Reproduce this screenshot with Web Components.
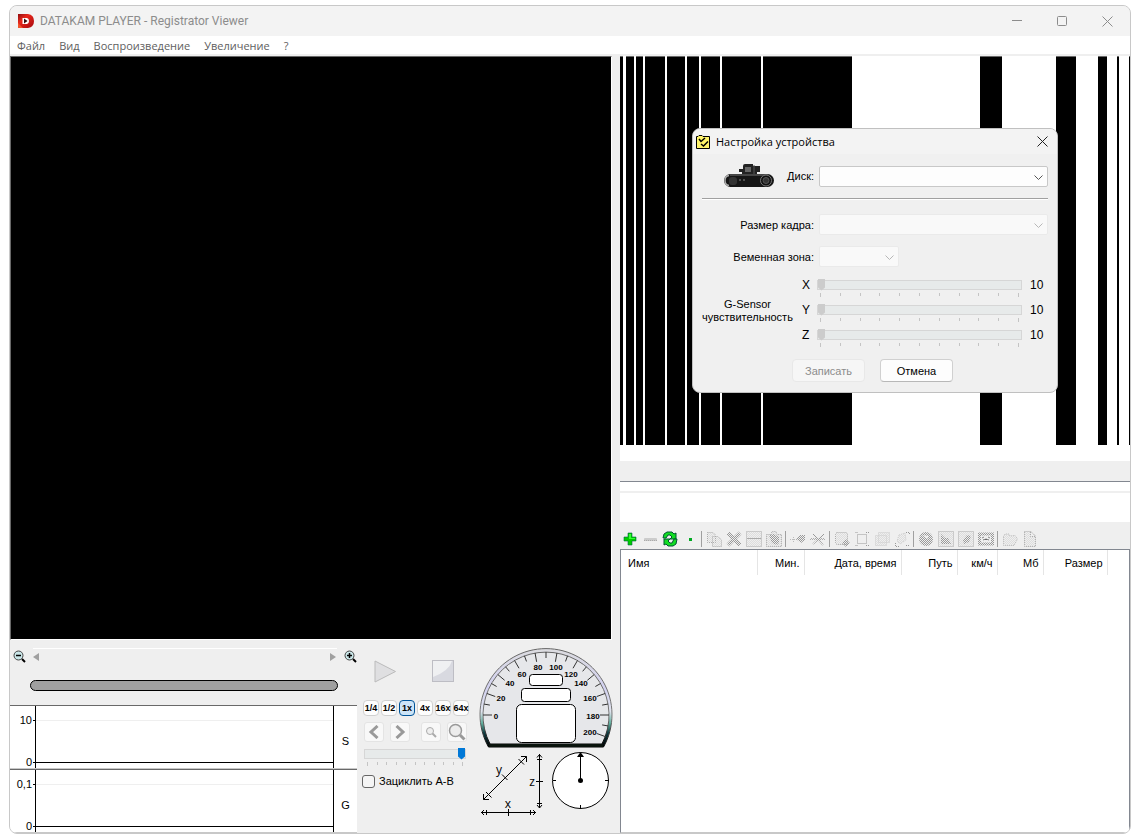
<!DOCTYPE html>
<html lang="ru">
<head>
<meta charset="utf-8">
<title>DATAKAM PLAYER - Registrator Viewer</title>
<style>
  body {
    margin: 0;
    background: #fff;
    font-family: "Liberation Sans", Arial, sans-serif;
    font-size: 11px;
    color: #000;
  }
</style>
</head>
<body>
<player-window></player-window>

<script>
// small helper: every element below renders a static shadow root
function define(name, html) {
  customElements.define(name, class extends HTMLElement {
    constructor() {
      super();
      this.attachShadow({ mode: 'open' });
      this.shadowRoot.innerHTML = typeof html === 'function' ? html(this) : html;
    }
  });
}

/* ---------- title bar ---------- */
define('title-bar', `
  <style>
    :host {
      display: flex;
      align-items: center;
      height: 30px;
      background: #f3f3f3;
      color: #8c8c8c;
      font: 12px/16px Roboto, sans-serif;
    }
    .logo { margin-left: 8px; margin-right: 6px; }
    .name { flex: 1; }
    button {
      width: 45px;
      height: 30px;
      padding: 0;
      border: 0;
      background: none;
    }
    button svg { display: block; margin: 0 auto; }
  </style>
  <svg class="logo" width="16" height="14" viewBox="0 0 16 14">
    <defs>
      <linearGradient id="r" x1="0" y1="0" x2="1" y2="1">
        <stop offset="0" stop-color="#8e0d10"/><stop offset=".35" stop-color="#e8281c"/><stop offset="1" stop-color="#a5080e"/>
      </linearGradient>
    </defs>
    <path d="M0 0H10Q16 1 16 7T10 14H0Z" fill="url(#r)"/>
    <path d="M0 9L5 14H0Z" fill="#f0542c"/>
    <path d="M4.500 4H9Q11 4.500 11 7T9 10H4.500Z" fill="#fff"/>
    <path d="M6 4.500V9.500L9.500 7Z" fill="#3a1010"/>
  </svg>
  <span class="name">DATAKAM PLAYER - Registrator Viewer</span>
  <button aria-label="Свернуть"><svg width="11" height="11"><path d="M0 4.500H10" stroke="#8c8c8c"/></svg></button>
  <button aria-label="Развернуть"><svg width="11" height="11"><rect x=".5" y=".5" width="9" height="9" rx="1" fill="none" stroke="#8c8c8c"/></svg></button>
  <button aria-label="Закрыть"><svg width="11" height="11"><path d="M.5 .5L10.500 10.500M10.500 .5L.5 10.500" stroke="#8c8c8c"/></svg></button>
`);

/* ---------- menu ---------- */
define('menu-bar', `
  <style>
    :host {
      display: flex;
      gap: 14px;
      height: 18px;
      padding-left: 7px;
      background: #fff;
      border-bottom: 2px solid #efefef;
    }
    button {
      padding: 0;
      border: 0;
      background: none;
      color: #606060;
      font: 11px/20px "Open Sans", sans-serif;
    }
  </style>
  <button>Файл</button>
  <button>Вид</button>
  <button>Воспроизведение</button>
  <button>Увеличение</button>
  <button>?</button>
`);

/* ---------- video ---------- */
define('video-view', `
  <style>
    :host {
      display: block;
      flex: 1;
      margin-right: 2px;
      background: #000;
      border: 1px solid #fff;
      border-top-color: #696969;
      border-left-color: #696969;
    }
  </style>
`);

/* ---------- time line ---------- */
define('time-scroll', `
  <style>
    :host {
      display: flex;
      flex-direction: column;
      height: 65px;
    }
    .row {
      display: flex;
      align-items: center;
      gap: 7px;
      padding: 8px 0 0 3px;
    }
    .line {
      flex: 1;
      display: flex;
      justify-content: space-between;
      align-items: center;
      height: 16px;
      border-top: 1px solid #fff;
    }
    button { padding: 0; border: 0; background: none; }
    button svg { display: block; }
    .bar {
      height: 9px;
      margin: 15px 19px 0 20px;
      border: 1px solid #000;
      border-radius: 6px;
      background: #a0a0a0;
    }
  </style>
  <div class="row">
    <button aria-label="Уменьшить"><svg width="13" height="13"><circle cx="5.500" cy="5.500" r="4.500" fill="#c9e6e8" stroke="#444"/><path d="M3 5.500H8" stroke="#000" stroke-width="1.500"/><path d="M9 9L12 12" stroke="#000" stroke-width="2"/></svg></button>
    <div class="line">
      <button aria-label="Назад"><svg width="8" height="8"><path d="M6 0V8L0 4Z" fill="#a0a0a0"/></svg></button>
      <button aria-label="Вперёд"><svg width="8" height="8"><path d="M1 0V8L7 4Z" fill="#a0a0a0"/></svg></button>
    </div>
    <button aria-label="Увеличить"><svg width="13" height="13"><circle cx="5.500" cy="5.500" r="4.500" fill="#c9e6e8" stroke="#444"/><path d="M3 5.500H8M5.500 3V8" stroke="#000" stroke-width="1.500"/><path d="M9 9L12 12" stroke="#000" stroke-width="2"/></svg></button>
  </div>
  <div class="bar"></div>
`);

define('data-chart', `
  <style>
    :host {
      display: grid;
      grid-template-columns: 25px minmax(0, 1fr) 23px;
      height: 62px;
      background: #fff;
      border-top: 1px solid #696969;
      border-bottom: 1px solid #c8c8c8;
    }
    .scale {
      display: flex;
      flex-direction: column;
      gap: 30px;
      padding-top: 8px;
      text-align: right;
      line-height: 12px;
    }
    .scale span { display: flex; justify-content: flex-end; align-items: center; gap: 1px; }
    .scale span::after { content: ""; width: 2px; height: 1px; background: #000; }
    .plot {
      display: grid;
      grid-template-rows: 14px 1px 41px 1px;
      border-left: 1px solid #000;
      border-right: 1px solid #000;
    }
    .grid { grid-row: 2; background: #efefef; }
    .zero { grid-row: 4; background: #000; }
    .unit { align-self: center; text-align: center; padding-top: 8px; }
  </style>
  <div class="scale"><span><slot name="max"></slot></span><span>0</span></div>
  <div class="plot"><i class="grid"></i><i class="zero"></i></div>
  <div class="unit"><slot></slot></div>
`);

/* ---------- slider with ticks ---------- */
define('tick-slider', el => {
  const disabled = el.hasAttribute('off');
  const label = el.getAttribute('label');
  const shown = el.getAttribute('shown');
  return `
  <style>
    :host { display: block; height: 25px; }
    .row { display: flex; align-items: flex-start; }
    label { width: 15px; line-height: 15px; font-size: 12px; }
    output { width: 17px; padding-left: 8px; line-height: 15px; font-size: 12px; }
    .mid { flex: 1; min-width: 0; }
    input {
      appearance: none;
      display: block;
      width: 100%;
      height: 13px;
      margin: 0;
      background: none;
    }
    input::-webkit-slider-runnable-track {
      box-sizing: border-box;
      height: 10px;
      border: 1px solid #d6d6d6;
      background: #e7eaea;
    }
    input::-webkit-slider-thumb {
      appearance: none;
      width: 7px;
      height: 12px;
      margin-top: -2px;
      border: 0;
      background: ${disabled ? '#ccc' : '#0078d7'};
      clip-path: polygon(0 0, 100% 0, 100% 75%, 50% 100%, 0 75%);
    }
    .ticks { display: flex; justify-content: space-between; padding: 2px 3px 0; }
    .ticks i { width: 1px; height: 3px; background: #c4c4c4; }
    .ticks i:first-child, .ticks i:last-child { height: 4px; }
  </style>
  <div class="row">
    ${label ? `<label for="r">${label}</label>` : ''}
    <div class="mid">
      <input id="r" type="range" min="0" max="10" value="${el.getAttribute('value')}" ${label ? '' : 'aria-label="Скорость"'} ${disabled ? 'disabled' : ''}>
      <div class="ticks">${'<i></i>'.repeat(11)}</div>
    </div>
    ${shown ? `<output for="r">${shown}</output>` : ''}
  </div>`;
});

/* ---------- playback controls ---------- */
define('play-controls', `
  <style>
    :host {
      display: flex;
      flex-direction: column;
      width: 107px;
      padding-top: 20px;
    }
    button { padding: 0; border: 0; background: none; }
    button svg { display: block; margin: 0 auto; }
    .main { display: flex; gap: 35px; padding-left: 12px; }
    .speed { display: flex; gap: 2px; margin: 17px 0 0 1px; }
    .speed button {
      box-sizing: border-box;
      width: 16px;
      height: 16px;
      border: 1px solid #d0d0d0;
      border-radius: 4px;
      background: #fdfdfd;
      display: flex;
      justify-content: center;
      font: bold 9px/14px "Liberation Sans", Arial, sans-serif;
      color: #000;
    }
    .speed .on { background: #cce4f7; border-color: #005499; }
    .nav { display: flex; gap: 6px; margin: 6px 0 5px 2px; }
    .nav button {
      box-sizing: border-box;
      width: 20px;
      height: 20px;
      border: 1px solid #e4e4e4;
      border-radius: 3px;
      background: #f8f8f8;
    }
    .nav .far { margin-left: 5px; }
    tick-slider { width: 102px; margin-left: 2px; }
    .loop { display: flex; align-items: center; gap: 4px; margin-top: 3px; line-height: 13px; }
    .loop input {
      appearance: none;
      box-sizing: border-box;
      width: 13px;
      height: 13px;
      margin: 0;
      border: 1px solid #666;
      border-radius: 3px;
      background: #f5f5f5;
    }
  </style>
  <div class="main">
    <button aria-label="Воспроизвести"><svg width="23" height="23"><path d="M1 1V22L21.500 11.500Z" fill="#dfdfe1" stroke="#bbb"/></svg></button>
    <button aria-label="Стоп"><svg width="23" height="23"><rect x=".5" y=".5" width="21" height="21" fill="#d8d9e0" stroke="#bdbdc4"/><path d="M1 1H20Q17 11 1 17Z" fill="#eff0f2"/></svg></button>
  </div>
  <div class="speed">
    <button>1/4</button><button>1/2</button><button class="on">1x</button><button>4x</button><button>16x</button><button>64x</button>
  </div>
  <div class="nav">
    <button aria-label="Предыдущий"><svg width="12" height="14"><path d="M9.500 1L3 7L9.500 13" fill="none" stroke="#999" stroke-width="3"/></svg></button>
    <button aria-label="Следующий"><svg width="12" height="14"><path d="M2.500 1L9 7L2.500 13" fill="none" stroke="#999" stroke-width="3"/></svg></button>
    <button class="far" aria-label="Мельче"><svg width="12" height="12"><circle cx="5" cy="5" r="3.500" fill="#eee" stroke="#aaa"/><path d="M7.500 7.500L11 11" stroke="#aaa" stroke-width="2"/></svg></button>
    <button aria-label="Крупнее"><svg width="18" height="18"><circle cx="7.500" cy="7.500" r="6" fill="#ececec" stroke="#999" stroke-width="1.500"/><path d="M12 12L16.500 16.500" stroke="#999" stroke-width="3"/></svg></button>
  </div>
  <tick-slider value="10"></tick-slider>
  <div class="loop"><input id="loop" type="checkbox"><label for="loop">Зациклить A-B</label></div>
`);

/* ---------- speedometer, axes, compass ---------- */
define('speed-gauge', () => {
  const cx = 67, cy = 67;
  let ticks = '';
  // one degree for one km/h, zero points to the left
  for (let v = 0; v <= 200; v += 10) {
    const a = (180 + v) * Math.PI / 180;
    const r = v % 20 ? 57 : 54;
    ticks += `<path d="M${cx + r * Math.cos(a)} ${cy + r * Math.sin(a)}L${cx + 63 * Math.cos(a)} ${cy + 63 * Math.sin(a)}"/>`;
  }
  const labels = [[0, 17, 71], [20, 22, 53], [40, 31, 38], [60, 43, 29], [80, 59, 22], [100, 77, 22],
    [120, 92, 29], [140, 102, 38], [160, 111, 53], [180, 114, 71], [200, 111, 87]];
  return `
  <style>
    :host { display: block; }
    svg { display: block; }
    text { font: bold 8px "Liberation Sans", Arial, sans-serif; text-anchor: middle; }
  </style>
  <svg width="134" height="100" viewBox="0 0 134 100">
    <defs>
      <linearGradient id="rim" x1="0" y1="0" x2="0" y2="1">
        <stop offset="0" stop-color="#dcdce0"/><stop offset=".4" stop-color="#d2d1f0"/>
        <stop offset=".64" stop-color="#e0e4ee"/><stop offset=".76" stop-color="#5fae9c"/>
        <stop offset=".86" stop-color="#0e3a40"/><stop offset="1" stop-color="#000"/>
      </linearGradient>
      <linearGradient id="edge" x1="0" y1="0" x2="0" y2="1">
        <stop offset="0" stop-color="#666"/><stop offset=".7" stop-color="#777"/><stop offset="1" stop-color="#000"/>
      </linearGradient>
    </defs>
    <path d="M9.500 99A66 66 0 1 1 124.500 99Z" fill="url(#rim)" stroke="url(#edge)"/>
    <path d="M11 96A63 63 0 1 1 123 96Z" fill="#e6e7ea" stroke="url(#edge)"/>
    <path d="M10 97.500H124" stroke="#0a140d" stroke-width="3"/>
    <g stroke="#333">${ticks}</g>
    ${labels.map(l => `<text x="${l[1]}" y="${l[2]}">${l[0]}</text>`).join('')}
    <g fill="#fff" stroke="#000">
      <rect x="50.500" y="26.500" width="33" height="11" rx="3"/>
      <rect x="42.500" y="40.500" width="49" height="13" rx="3"/>
      <rect x="37.500" y="56.500" width="59" height="38" rx="5"/>
    </g>
  </svg>`;
});

define('sensor-view', `
  <style>
    :host { display: flex; justify-content: space-between; padding: 4px 3px 0 1px; }
    .axes { margin-top: 2px; }
    text { font: 12px "Open Sans", sans-serif; text-anchor: middle; }
  </style>
  <svg class="axes" width="64" height="64">
    <g stroke="#000" fill="none">
      <path d="M3.500 45.500L46.500 2.500M41 2.500H46.500V8M3.500 40V45.500H9M22 20.500L27.500 26M38.500 5L44 10.500M6 38L11.500 43.500"/>
      <path d="M59.500 0V54M57 3.500L59.500 .5L62 3.500M57 51L59.500 54L62 51M56 27.500H63M57 5.500H62M57 49.500H62"/>
      <path d="M1 58.500H56M4 56L1.500 58.500L4 61M53 56L55.500 58.500L53 61M28.500 55V62M6.500 56V61M50.500 56V61"/>
    </g>
    <text x="19" y="20">y</text><text x="52" y="32">z</text><text x="28" y="54">x</text>
  </svg>
  <svg width="58" height="58">
    <circle cx="28.500" cy="28.500" r="28" fill="#fff" stroke="#000"/>
    <path d="M28.500 1V28M28.500 53V57M1 28.500H4M53 28.500H57" stroke="#000"/>
    <path d="M28.500 0L32 5H25Z"/><circle cx="28.500" cy="28.500" r="2.500"/>
  </svg>
`);

/* ---------- map, its tiles are bare stripes ---------- */
define('track-map', () => {
  const bars = [[0, 3], [6, 14], [16, 23], [25, 45], [47, 65], [67, 79], [81, 100], [102, 141], [143, 232],
    [360, 382], [436, 456], [478, 487], [497, 499], [509, 510]];
  const draw = (y, h) => bars.map(b => `<rect x="${b[0]}" y="${y}" width="${b[1] - b[0]}" height="${h}"/>`).join('');
  return `
  <style>
    :host { display: block; padding-bottom: 16px; background: #fff; }
    svg { display: block; width: 100%; height: 389px; }
  </style>
  <svg viewBox="0 0 510 389" preserveAspectRatio="none" shape-rendering="crispEdges">
    ${draw(1, 388)}<g fill="#696969">${draw(0, 1)}</g>
  </svg>`;
});

define('info-panel', `
  <style>
    :host {
      display: block;
      margin-top: 20px;
      border-top: 1px solid #828790;
      background: #fff;
    }
    .head { height: 9px; border-bottom: 2px solid #efefef; }
    .text { height: 29px; }
  </style>
  <div class="head"></div>
  <div class="text"></div>
`);

/* ---------- toolbar ---------- */
const dots = 'fill="url(#d)" stroke="#aaa" stroke-dasharray="1 1"';
const icons = {
  'Добавить': '<path d="M6 2H10V6H14V10H10V14H6V10H2V6H6Z" fill="#0c0" stroke="#064" stroke-width=".6"/><path d="M7 3H9V7H13V8H7Z" fill="#3f3"/>',
  'Убрать': '<rect x="2" y="7" width="13" height="3" rx="1" fill="#ccc"/><path d="M2 9.500H15" stroke="#aaa" stroke-dasharray="1 1"/>',
  'Обновить': '<path d="M1 7L2 3L5 1H10L12 3L14 2V8H8L10 6L8 4H6L4 7Z" fill="#1d2" stroke="#053"/><path d="M15 8L14 13L11 15H6L4 13L2 14V8H8L6 10L8 12H10L12 8Z" fill="#1d2" stroke="#053"/>',
  'Меню': '<path d="M7 7H10V10H7Z" fill="#0a2"/>',
  'Копировать': `<path d="M1.500 1.500H7L9.500 4V11.500H1.500ZM6.500 5.500H12L15.500 9V15.500H6.500Z" ${dots}/>`,
  'Удалить': '<path d="M2 2L14 14M14 2L2 14" stroke="url(#k)" stroke-width="4"/>',
  'Сохранить': `<path d="M.5 .5H15.500V15.500H.5Z" ${dots}/><path d="M3 1H13V6H3ZM3 9H13V15H3Z" fill="url(#d)"/><path d="M1 7.500H15" stroke="#aaa"/>`,
  'Снимок': `<path d="M.5 3.500H5L6 .5H10L11 3.500H15.500V15.500H.5Z" ${dots}/><path d="M3 4L8 3L13 6V12L11 14L6 12Z" fill="url(#k)"/>`,
  'Метка': '<path d="M0 8.500H7M3.500 6V11" stroke="#bbb" stroke-dasharray="1 1"/><path d="M6 8L10 4H15V9L11 12Z" fill="url(#k)"/>',
  'Снять метку': '<path d="M0 8H15M3 3L13 14M14 3L3 13" stroke="url(#k)" stroke-width="1.500"/>',
  'Выбор': `<rect x="1.500" y="1.500" width="12" height="12" rx="2" ${dots}/><path d="M12 8L16 12L12 16L8 12Z" fill="url(#k)"/>`,
  'Область': `<rect x="3.500" y="3.500" width="9" height="9" fill="none" stroke="#999" stroke-dasharray="1 1"/><path d="M1.500 1.500H4M12 1.500H15M1.500 14.500H4M12 14.500H15" stroke="#999" stroke-dasharray="1 1"/>`,
  'Слои': '<path d="M4.500 1.500H15.500V11.500H4.500ZM1.500 4.500H12.500V14.500H1.500Z" fill="url(#d)" stroke="#ccc" stroke-dasharray="1 1"/>',
  'Связь': '<path d="M5 4L11 2L12 9L6 13L3 10Z" fill="url(#d)" stroke="#ccc" stroke-dasharray="1 1"/><path d="M12 1.500H15.500V4M1.500 12V15.500H5M12 14.500H15" fill="none" stroke="#999" stroke-dasharray="1 1"/>',
  'Глобус': '<circle cx="8" cy="8" r="7" fill="url(#k)"/><path d="M4 4L11 5L9 8Z" fill="#eee"/>',
  'Вид карты': `<rect x=".5" y=".5" width="15" height="15" ${dots}/><path d="M3 3L7 7H10L13 13H3Z" fill="url(#k)"/>`,
  'Привязка': `<rect x=".5" y=".5" width="15" height="15" ${dots}/><path d="M9 4L13 5L11 11L6 13L5 9Z" fill="url(#k)"/>`,
  'Маршрут': '<rect x="1.500" y="3" width="13" height="10" fill="none" stroke="url(#k)" stroke-width="3"/><path d="M4 7L6 6M10 6L12 7M5 9L8 8L11 9" stroke="#888"/>',
  'Открыть': '<path d="M1.500 5.500L3 3H7L8 5L13 4.500L15.500 8L12 14.500H1.500Z" fill="url(#d)" stroke="#bbb" stroke-dasharray="1 1"/>',
  'Файл': `<path d="M2.500 .5H9L13.500 5V15.500H2.500ZM8.500 1V5.500H13" ${dots}/>`
};

define('tool-bar', () => {
  const groups = [4, 4, 2, 4, 4, 2];
  const names = Object.keys(icons);
  let n = 0;
  const html = groups.map(count => names.slice(n, n += count).map(name =>
    `<button aria-label="${name}"><svg width="16" height="16"><defs>
      <pattern id="d" width="2" height="2" patternUnits="userSpaceOnUse"><path d="M0 0H1V1H0ZM1 1H2V2H1Z" fill="#ddd"/></pattern>
      <pattern id="k" width="2" height="2" patternUnits="userSpaceOnUse"><path d="M0 0H1V1H0ZM1 1H2V2H1Z" fill="#999"/></pattern>
    </defs>${icons[name]}</svg></button>`).join('')).join('<i></i>');
  return `
  <style>
    :host { display: flex; align-items: center; height: 27px; }
    button { width: 20px; height: 20px; padding: 0; border: 0; background: none; }
    button svg { display: block; margin: 5px auto 0; }
    i { width: 1px; height: 16px; margin: 7px 2px 0 1px; background: #a0a0a0; }
  </style>${html}`;
});

/* ---------- file list ---------- */
define('file-list', `
  <style>
    :host {
      display: block;
      flex: 1;
      border: 1px solid #828790;
      border-bottom-color: #c8c8c8;
      background: #fff;
    }
    table { width: 100%; table-layout: fixed; border-collapse: collapse; }
    th {
      box-sizing: border-box;
      height: 25px;
      padding: 0 4px;
      border-right: 1px solid #e5e5e5;
      font-weight: normal;
      text-align: right;
      white-space: nowrap;
    }
    th:first-child { text-align: left; padding-left: 7px; }
    th:last-child { border: 0; }
  </style>
  <table>
    <colgroup>
      <col style="width:136px"><col style="width:47px"><col style="width:97px"><col style="width:56px">
      <col style="width:40px"><col style="width:46px"><col style="width:64px"><col>
    </colgroup>
    <thead>
      <tr><th>Имя</th><th>Мин.</th><th>Дата, время</th><th>Путь</th><th>км/ч</th><th>Мб</th><th>Размер</th><th></th></tr>
    </thead>
  </table>
`);

/* ---------- device dialog ---------- */
define('combo-field', el => `
  <style>
    :host { display: flex; align-items: center; justify-content: flex-end; gap: 5px; }
    .box { display: grid; align-items: center; width: ${el.getAttribute('size')}px; }
    select {
      appearance: none;
      grid-area: 1 / 1;
      box-sizing: border-box;
      width: 100%;
      height: 21px;
      margin: 0;
      border: 1px solid #c8c8c8;
      border-radius: 2px;
      background: #fdfdfd;
    }
    svg { grid-area: 1 / 1; justify-self: end; margin: 2px 5px 0 0; }
    select:disabled { border-color: #eaeaea; background: #f9f9f9; opacity: 1; }
    select:disabled + svg { opacity: .4; }
  </style>
  <label for="s">${el.getAttribute('label')}</label>
  <div class="box">
    <select id="s" ${el.hasAttribute('off') ? 'disabled' : ''}></select>
    <svg width="9" height="5"><path d="M.5 .5L4.500 4.500L8.500 .5" fill="none" stroke="#555"/></svg>
  </div>
`);

define('device-dialog', `
  <style>
    :host {
      display: block;
      box-sizing: border-box;
      width: 366px;
      border: 1px solid #c0c0c0;
      border-radius: 8px;
      background: #f0f0f0;
      overflow: hidden;
    }
    header {
      display: flex;
      align-items: center;
      gap: 6px;
      height: 25px;
      padding: 0 9px 0 3px;
      background: #f3f3f3;
      font: 11px/16px "Open Sans", sans-serif;
    }
    header span { flex: 1; }
    header button { padding: 0; border: 0; background: none; }
    header svg { display: block; }
    .body { padding: 10px 9px 10px; }
    .disk { display: flex; align-items: center; justify-content: flex-end; gap: 13px; height: 24px; }
    hr { height: 1px; margin: 10px 0 14px; border: 0; background: #a0a0a0; border-bottom: 1px solid #fff; }
    .zone { margin: 11px 149px 11px 0; }
    .sensor { display: flex; gap: 9px; align-items: center; }
    .sensor p { width: 91px; margin: 0 0 10px; text-align: center; line-height: 13px; white-space: nowrap; }
    .sliders { flex: 1; margin-right: 1px; }
    footer { display: flex; gap: 15px; margin: 6px 0 0 90px; }
    footer button {
      box-sizing: border-box;
      width: 73px;
      height: 23px;
      padding: 0;
      border: 1px solid #d0d0d0;
      border-bottom-color: #b8b8b8;
      border-radius: 4px;
      background: #fdfdfd;
      font: inherit;
      color: #000;
    }
    footer button:disabled { border-color: #e8e8e8; background: #f6f6f6; color: #8c8c8c; }
  </style>
  <header>
    <svg width="14" height="14"><path d="M.5 1.500H2L3 .5H6L7 1.500H13.500V13.500H.5Z" fill="#fff46a" stroke="#000"/><path d="M3 4L5 6.500L9 3M5 9L7.500 11L12 6.500" fill="none" stroke="#000" stroke-width="1.500"/></svg>
    <span>Настройка устройства</span>
    <button aria-label="Закрыть"><svg width="11" height="11"><path d="M.5 .5L10.500 10.500M10.500 .5L.5 10.500" stroke="#222"/></svg></button>
  </header>
  <div class="body">
    <div class="disk">
      <svg width="50" height="24">
        <path d="M19 2Q19 0 21 0H29V2H36V8H33V12H18V8H15V5H19Z" fill="#222"/>
        <rect x="21" y="3" width="6" height="5" fill="#666"/><path d="M30 1V10" stroke="#555"/>
        <rect y="10" width="50" height="13" rx="6.500" fill="#161616"/>
        <path d="M6 11H44" stroke="#777"/>
        <path d="M5 11.500Q1 12 1 16.500T5 21.500" fill="none" stroke="#aaa" stroke-width="1.500"/>
        <rect x="5" y="13" width="8" height="8" rx="3" fill="#333"/>
        <circle cx="42" cy="16.500" r="5.500" fill="#111" stroke="#777"/><circle cx="42" cy="16.500" r="3" fill="#333" stroke="#555"/>
        <path d="M15 16H17M19 16H21" stroke="#888"/>
      </svg>
      <combo-field label="Диск:" size="229"></combo-field>
    </div>
    <hr>
    <combo-field label="Размер кадра:" size="229" off></combo-field>
    <combo-field class="zone" label="Веменная зона:" size="80" off></combo-field>
    <div class="sensor">
      <p>G-Sensor<br>чувствительность</p>
      <div class="sliders">
        <tick-slider label="X" value="0" shown="10" off></tick-slider>
        <tick-slider label="Y" value="0" shown="10" off></tick-slider>
        <tick-slider label="Z" value="0" shown="10" off></tick-slider>
      </div>
    </div>
    <footer>
      <button disabled>Записать</button>
      <button>Отмена</button>
    </footer>
  </div>
`);

/* ---------- whole window ---------- */
define('player-window', `
  <style>
    :host {
      display: flex;
      flex-direction: column;
      box-sizing: border-box;
      min-height: calc(100vh - 10px);
      margin: 5px 6px 5px 9px;
      border: 1px solid #c8c8c8;
      border-radius: 8px;
      background: #efefef;
      overflow: hidden;
    }
    main {
      flex: 1;
      display: grid;
      grid-template-columns: minmax(0, 604fr) minmax(0, 510fr);
      gap: 6px;
    }
    .left, .right { display: flex; flex-direction: column; }
    .right { position: relative; }
    .bottom { display: flex; }
    .time { flex: 1; margin-right: 5px; }
    .dials { width: 134px; margin: 8px 1px 0 10px; }
    /* floats over the map */
    device-dialog { position: absolute; top: 72px; right: 72px; }
  </style>
  <title-bar></title-bar>
  <menu-bar></menu-bar>
  <main>
    <div class="left">
      <video-view></video-view>
      <div class="bottom">
        <div class="time">
          <time-scroll></time-scroll>
          <data-chart><span slot="max">10</span>S</data-chart>
          <data-chart><span slot="max">0,1</span>G</data-chart>
        </div>
        <play-controls></play-controls>
        <div class="dials">
          <speed-gauge></speed-gauge>
          <sensor-view></sensor-view>
        </div>
      </div>
    </div>
    <div class="right">
      <track-map></track-map>
      <info-panel></info-panel>
      <tool-bar></tool-bar>
      <file-list></file-list>
      <device-dialog></device-dialog>
    </div>
  </main>
`);
</script>
</body>
</html>
